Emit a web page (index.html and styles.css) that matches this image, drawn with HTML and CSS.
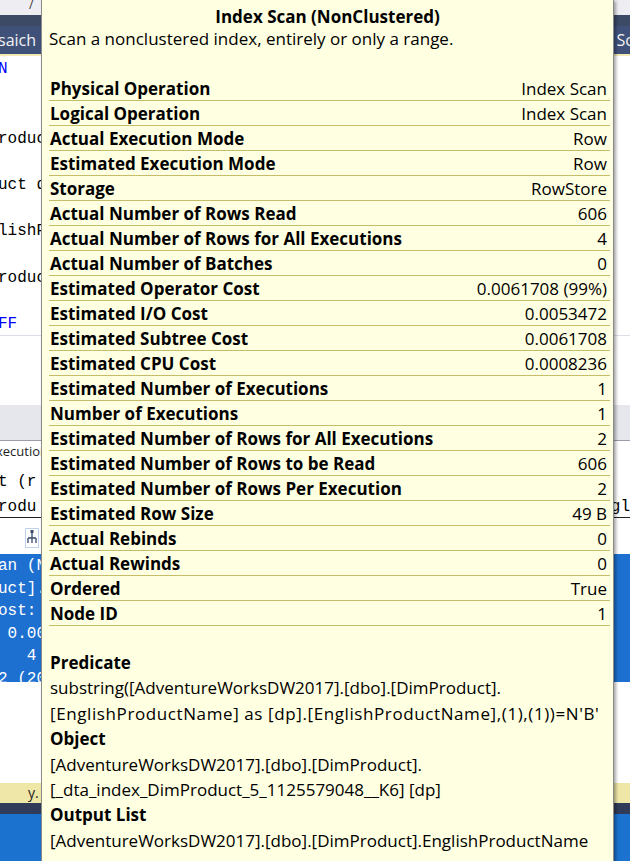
FILE: index.html
```html
<!DOCTYPE html>
<html>
<head>
<meta charset="utf-8">
<link rel="stylesheet" href="styles.css">
</head>
<body>
<div class="app">
  <div class="topbar"><span class="mark">/</span></div>
  <div class="navband"></div>
  <div class="tabbar"><span class="tab-left">saich</span><span class="tab-right">Sc</span></div>
  <div class="tabline"></div>
  <div class="editor">
    <div class="cl kw">N</div>
    <div class="cl"></div>
    <div class="cl"></div>
    <div class="cl">roduct</div>
    <div class="cl"></div>
    <div class="cl">uct d</div>
    <div class="cl"></div>
    <div class="cl">lishP</div>
    <div class="cl"></div>
    <div class="cl">roduct</div>
    <div class="cl"></div>
    <div class="cl kw">FF</div>
  </div>
  <div class="hline"></div>
  <div class="gap"></div>
  <div class="splitter"></div>
  <div class="restabs"><span class="restab">xecution</span></div>
  <div class="results">
    <div class="rl">t (r</div>
    <div class="rl row-between"><span>rodu</span><span>gl</span></div>
    <div class="rline"></div>
    <div class="iconrow">
      <svg class="planicon" width="14" height="20" viewBox="0 0 14 20">
        <rect x="0.5" y="0.5" width="13" height="19" fill="none" stroke="#7FA7D9" stroke-dasharray="1 1"/>
        <path d="M7 3 V10 M3 10 H11 M3 10 V15 M11 10 V15 M7 10 V15" stroke="#3a4a6a" stroke-width="1.3" fill="none"/>
        <rect x="5.5" y="2" width="3" height="3" fill="#3a4a6a"/>
      </svg>
    </div>
    <div class="selblock">
      <div class="sl">an (N</div>
      <div class="sl">uct].</div>
      <div class="sl">ost: </div>
      <div class="sl"> 0.00</div>
      <div class="sl">   4 c</div>
      <div class="sl">2 (20</div>
    </div>
  </div>
  <div class="filler"></div>
  <div class="infobar"><span class="infotext">y.</span></div>
  <div class="navline"></div>
  <div class="statusbar"></div>

  <div class="tooltip">
    <div class="tt-title">Index Scan (NonClustered)</div>
    <div class="tt-desc">Scan a nonclustered index, entirely or only a range.</div>
    <div class="tt-rows">
      <div class="tt-row"><span class="k">Physical Operation</span><span class="v">Index Scan</span></div>
      <div class="tt-row"><span class="k">Logical Operation</span><span class="v">Index Scan</span></div>
      <div class="tt-row"><span class="k">Actual Execution Mode</span><span class="v">Row</span></div>
      <div class="tt-row"><span class="k">Estimated Execution Mode</span><span class="v">Row</span></div>
      <div class="tt-row"><span class="k">Storage</span><span class="v">RowStore</span></div>
      <div class="tt-row"><span class="k">Actual Number of Rows Read</span><span class="v">606</span></div>
      <div class="tt-row"><span class="k">Actual Number of Rows for All Executions</span><span class="v">4</span></div>
      <div class="tt-row"><span class="k">Actual Number of Batches</span><span class="v">0</span></div>
      <div class="tt-row"><span class="k">Estimated Operator Cost</span><span class="v">0.0061708 (99%)</span></div>
      <div class="tt-row"><span class="k">Estimated I/O Cost</span><span class="v">0.0053472</span></div>
      <div class="tt-row"><span class="k">Estimated Subtree Cost</span><span class="v">0.0061708</span></div>
      <div class="tt-row"><span class="k">Estimated CPU Cost</span><span class="v">0.0008236</span></div>
      <div class="tt-row"><span class="k">Estimated Number of Executions</span><span class="v">1</span></div>
      <div class="tt-row"><span class="k">Number of Executions</span><span class="v">1</span></div>
      <div class="tt-row"><span class="k">Estimated Number of Rows for All Executions</span><span class="v">2</span></div>
      <div class="tt-row"><span class="k">Estimated Number of Rows to be Read</span><span class="v">606</span></div>
      <div class="tt-row"><span class="k">Estimated Number of Rows Per Execution</span><span class="v">2</span></div>
      <div class="tt-row"><span class="k">Estimated Row Size</span><span class="v">49 B</span></div>
      <div class="tt-row"><span class="k">Actual Rebinds</span><span class="v">0</span></div>
      <div class="tt-row"><span class="k">Actual Rewinds</span><span class="v">0</span></div>
      <div class="tt-row"><span class="k">Ordered</span><span class="v">True</span></div>
      <div class="tt-row"><span class="k">Node ID</span><span class="v">1</span></div>
    </div>
    <div class="tt-section">
      <div class="sec-h">Predicate</div>
      <div class="sec-t">substring([AdventureWorksDW2017].[dbo].[DimProduct].</div>
      <div class="sec-t wide">[EnglishProductName] as [dp].[EnglishProductName],(1),(1))=N'B'</div>
      <div class="sec-h">Object</div>
      <div class="sec-t">[AdventureWorksDW2017].[dbo].[DimProduct].</div>
      <div class="sec-t">[_dta_index_DimProduct_5_1125579048__K6] [dp]</div>
      <div class="sec-h">Output List</div>
      <div class="sec-t">[AdventureWorksDW2017].[dbo].[DimProduct].EnglishProductName</div>
    </div>
  </div>
</div>
</body>
</html>
```

FILE: styles.css
```css
html, body {
  margin: 0;
  padding: 0;
}
body {
  width: 630px;
  height: 861px;
  overflow: hidden;
  background: #ffffff;
}
.app {
  position: relative;
  width: 630px;
  height: 861px;
  display: flex;
  flex-direction: column;
  overflow: hidden;
  font-family: "Open Sans", "Noto Sans", sans-serif;
}
.topbar {
  height: 15px;
  background: #eeeef2;
  font-size: 12px;
  line-height: 9px;
  color: #333;
  padding-left: 29px;
  overflow: hidden;
}
.navband {
  height: 11px;
  background: #3d4a66;
}
.tabbar {
  height: 28px;
  background: #405179;
  display: flex;
  justify-content: space-between;
  align-items: center;
  color: #f2f2f2;
  font-size: 16px;
}
.tab-left {
  margin-left: -2px;
}
.tab-right {
  margin-right: -3px;
}
.tabline {
  height: 2px;
  background: #f3e9b5;
}
.editor {
  height: 279px;
  padding-top: 2px;
  box-sizing: border-box;
  font-family: "Liberation Mono", monospace;
  font-size: 16px;
}
.cl {
  height: 23.2px;
  line-height: 23.2px;
  color: #000;
  white-space: pre;
  margin-left: -2px;
}
.cl.kw {
  color: #0000ff;
}
.hline {
  height: 1px;
  background: #dcdde6;
}
.gap {
  height: 69px;
}
.splitter {
  height: 35px;
  background: #e6e7ed;
  border-bottom: 1px solid #9a9caa;
}
.restabs {
  height: 22px;
  font-size: 13px;
  line-height: 20px;
  color: #1e1e1e;
  margin-left: -4px;
}
.results {
  font-family: "Liberation Mono", monospace;
  font-size: 16px;
  padding-top: 7px;
}
.rl {
  height: 25px;
  line-height: 25px;
  white-space: pre;
  color: #000;
  margin-left: -2px;
}
.row-between {
  display: flex;
  justify-content: space-between;
}
.rline {
  height: 1px;
  background: #222;
  margin-top: -3px;
}
.iconrow {
  height: 36px;
  display: flex;
  align-items: center;
  padding-left: 25px;
  padding-top: 4px;
  box-sizing: border-box;
}
.selblock {
  height: 127px;
  background: #1d6fd0;
  color: #ffffff;
  padding-top: 1px;
}
.sl {
  height: 22.5px;
  line-height: 22.5px;
  white-space: pre;
  margin-left: -2px;
}
.filler {
  flex: 1;
}
.infobar {
  height: 20px;
  background: #efe7a8;
  font-size: 14px;
  line-height: 20px;
  color: #222;
  padding-left: 28px;
}
.navline {
  height: 11px;
  background: #2f3b58;
}
.statusbar {
  height: 47px;
  background: #1b72cf;
}

/* tooltip overlay */
.tooltip {
  position: absolute;
  left: 41px;
  top: -1px;
  width: 571px;
  height: 880px;
  background: #ffffe1;
  border: 1px solid #8a8a8a;
  box-shadow: 2px 2px 3px rgba(0, 0, 0, 0.35);
  color: #000;
  font-family: "Open Sans", "Noto Sans", sans-serif;
  font-size: 17px;
}
.tt-title {
  padding-top: 6px;
  line-height: 22px;
  font-weight: bold;
  text-align: center;
}
.tt-desc {
  line-height: 22px;
  padding-left: 7px;
}
.tt-rows {
  margin: 26px 3px 0 7px;
}
.tt-row {
  display: flex;
  justify-content: space-between;
  align-items: center;
  height: 24px;
  border-bottom: 1px solid #c6bd6a;
}
.k {
  font-weight: bold;
  padding-left: 1px;
}
.v {
  padding-right: 3px;
}
.tt-section {
  margin-top: 24px;
  padding-left: 8px;
}
.sec-h {
  font-weight: bold;
  line-height: 25.4px;
}
.sec-t {
  line-height: 25.4px;
  white-space: nowrap;
}
.sec-t.wide {
  letter-spacing: 0.6px;
}
```
